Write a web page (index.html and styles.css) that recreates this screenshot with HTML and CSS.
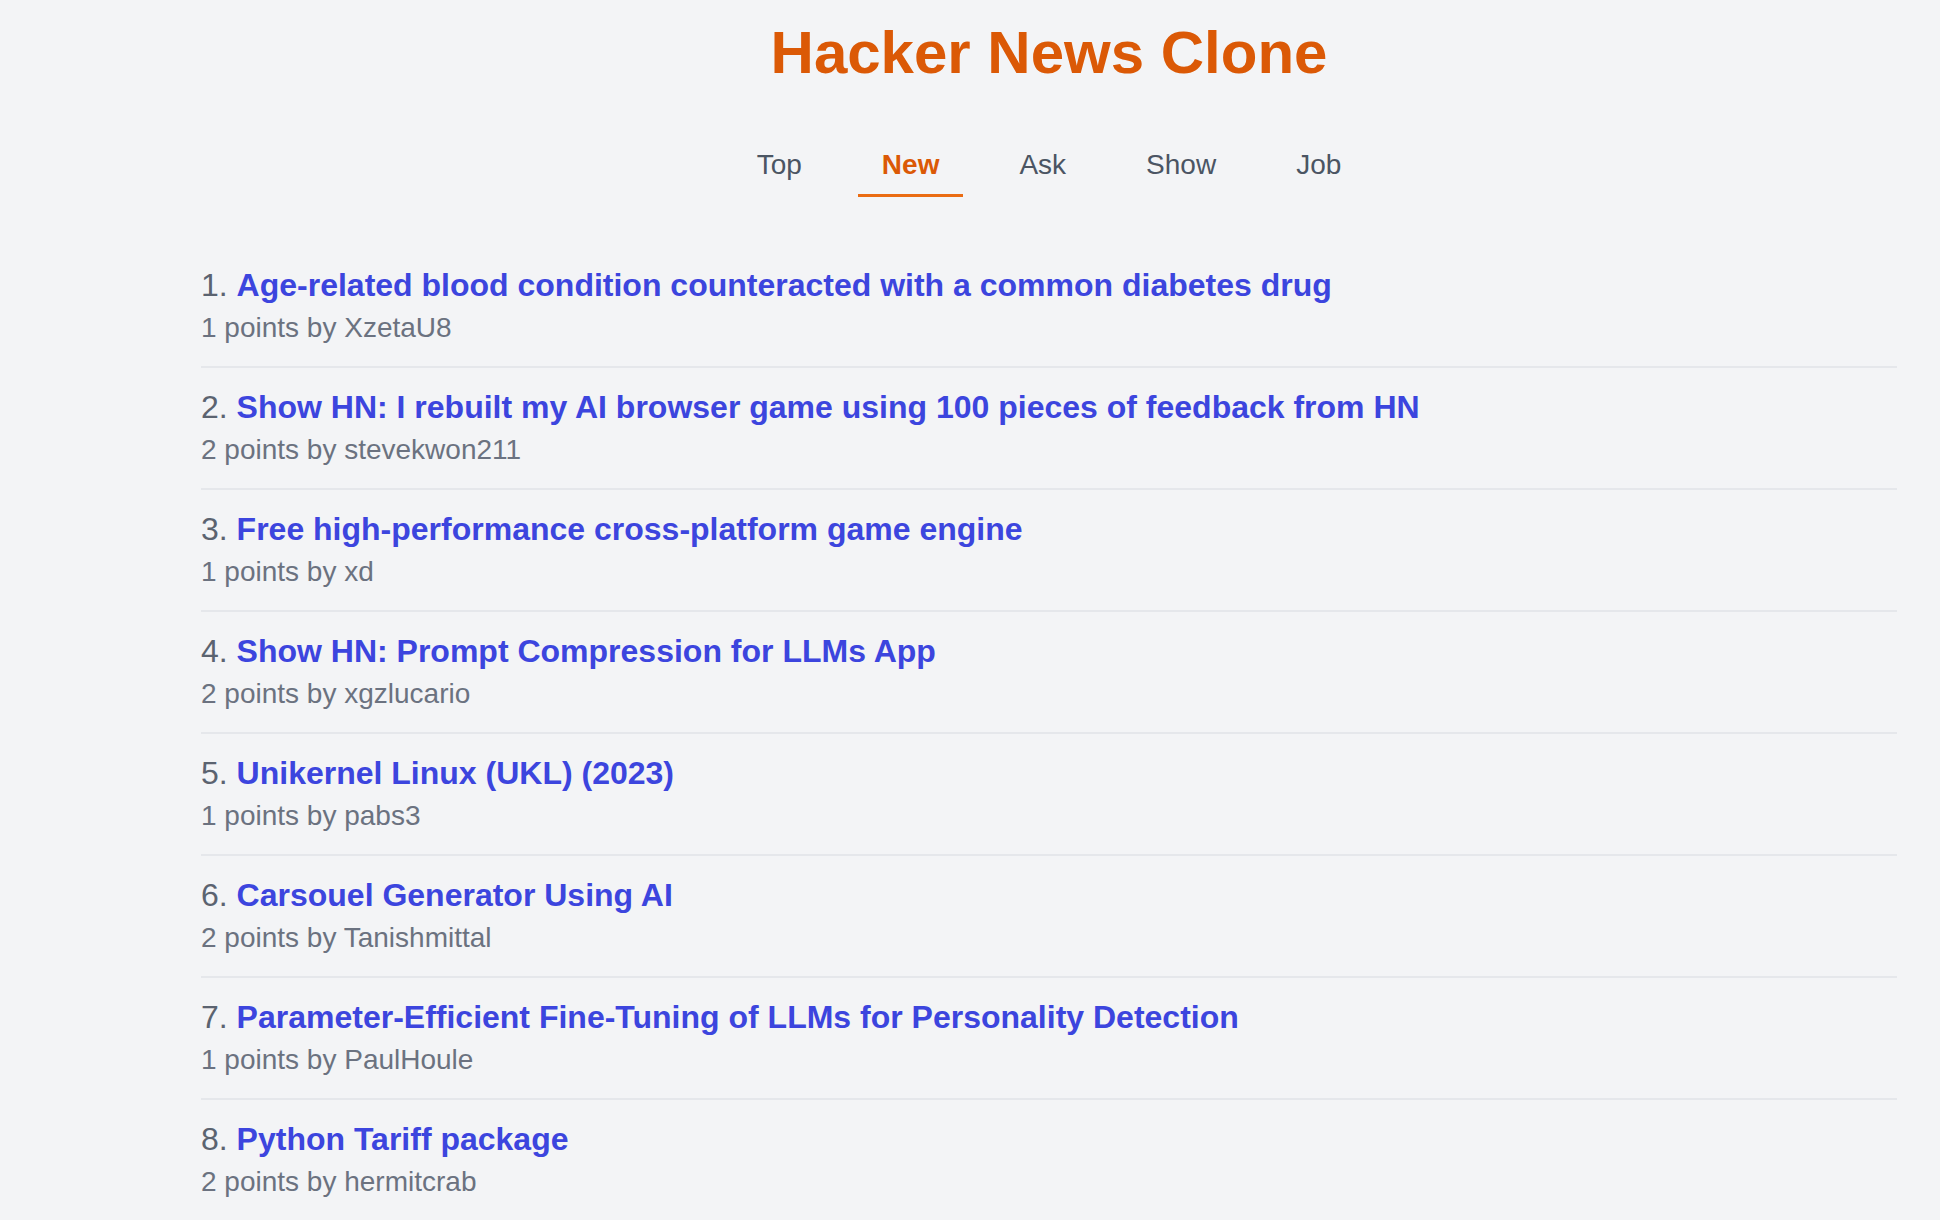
FILE: index.html
```html
<!DOCTYPE html>
<html lang="en">
<head>
<meta charset="utf-8">
<title>Hacker News Clone</title>
<link rel="stylesheet" href="styles.css">
</head>
<body>
<div class="page">
  <header class="header">
    <h1 class="brand">Hacker News Clone</h1>
    <nav class="tabs">
      <a class="tab" href="#">Top</a>
      <a class="tab active" href="#">New</a>
      <a class="tab" href="#">Ask</a>
      <a class="tab" href="#">Show</a>
      <a class="tab" href="#">Job</a>
    </nav>
  </header>
  <ul class="stories">
    <li class="story">
      <div class="story-title"><span class="rank">1. </span><a href="#">Age-related blood condition counteracted with a common diabetes drug</a></div>
      <div class="meta">1 points by XzetaU8</div>
    </li>
    <li class="story">
      <div class="story-title"><span class="rank">2. </span><a href="#">Show HN: I rebuilt my AI browser game using 100 pieces of feedback from HN</a></div>
      <div class="meta">2 points by stevekwon211</div>
    </li>
    <li class="story">
      <div class="story-title"><span class="rank">3. </span><a href="#">Free high-performance cross-platform game engine</a></div>
      <div class="meta">1 points by xd</div>
    </li>
    <li class="story">
      <div class="story-title"><span class="rank">4. </span><a href="#">Show HN: Prompt Compression for LLMs App</a></div>
      <div class="meta">2 points by xgzlucario</div>
    </li>
    <li class="story">
      <div class="story-title"><span class="rank">5. </span><a href="#">Unikernel Linux (UKL) (2023)</a></div>
      <div class="meta">1 points by pabs3</div>
    </li>
    <li class="story">
      <div class="story-title"><span class="rank">6. </span><a href="#">Carsouel Generator Using AI</a></div>
      <div class="meta">2 points by Tanishmittal</div>
    </li>
    <li class="story">
      <div class="story-title"><span class="rank">7. </span><a href="#">Parameter-Efficient Fine-Tuning of LLMs for Personality Detection</a></div>
      <div class="meta">1 points by PaulHoule</div>
    </li>
    <li class="story">
      <div class="story-title"><span class="rank">8. </span><a href="#">Python Tariff package</a></div>
      <div class="meta">2 points by hermitcrab</div>
    </li>
  </ul>
</div>
</body>
</html>
```
FILE: styles.css
```css
html, body {
  margin: 0;
  padding: 0;
  background: #f3f4f6;
  font-family: "Liberation Sans", Arial, sans-serif;
}

.page {
  margin-left: 201px;
  width: 1696px;
}

.header {
  display: flex;
  flex-direction: column;
  align-items: center;
  padding-top: 23px;
}

.brand {
  margin: 0;
  font-size: 60px;
  line-height: 60px;
  font-weight: 700;
  color: #db5906;
}

.tabs {
  display: flex;
  gap: 32px;
  margin-top: 53px;
}

.tab {
  display: block;
  padding: 11px 24px 11px;
  font-size: 28px;
  line-height: 36px;
  color: #4b5563;
  text-decoration: none;
  border-bottom: 3px solid transparent;
}

.tab.active {
  color: #db5906;
  font-weight: 700;
  border-bottom-color: #ea6c13;
}

.stories {
  list-style: none;
  margin: 49px 0 0;
  padding: 0;
}

.story {
  padding: 16px 0 18px;
  border-bottom: 2px solid #e5e7eb;
}

.story-title {
  font-size: 32px;
  line-height: 46px;
}

.rank {
  color: #5b6370;
}

.story-title a {
  color: #3c45de;
  font-weight: 700;
  text-decoration: none;
}

.meta {
  font-size: 28px;
  line-height: 40px;
  color: #6b7280;
}
```
